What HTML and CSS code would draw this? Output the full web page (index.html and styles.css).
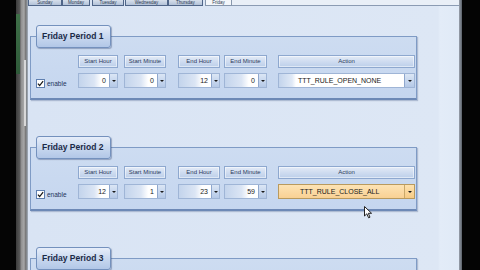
FILE: index.html
```html
<!DOCTYPE html>
<html>
<head>
<meta charset="utf-8">
<link rel="stylesheet" href="styles.css">
</head>
<body>
<div class="screen">
  <div class="edge-left"></div>
  <div class="gutter"><div class="gutter-green"></div><div class="gutter-light"></div></div>
  <div class="window">
    <div class="tabbar">
      <div class="tab t-sun">Sunday</div>
      <div class="tab t-mon">Monday</div>
      <div class="tab t-tue">Tuesday</div>
      <div class="tab t-wed">Wednesday</div>
      <div class="tab t-thu">Thursday</div>
      <div class="tab t-fri active">Friday</div>
      <div class="tab-line"></div>
    </div>
    <div class="content">
      <section class="group">
        <div class="group-title">Friday Period 1</div>
        <div class="panel">
          <div class="row heads">
            <div class="lead"></div>
            <div class="colhead sh">Start Hour</div>
            <div class="colhead sm">Start Minute</div>
            <div class="colhead eh">End Hour</div>
            <div class="colhead em">End Minute</div>
            <div class="colhead ac">Action</div>
          </div>
          <div class="row ctrls">
            <div class="lead enable"><span class="chk"><svg viewBox="0 0 8 8" width="7" height="7"><path d="M1 4.2 L3 6.3 L7 1.2" fill="none" stroke="#1a1a1a" stroke-width="1.4"/></svg></span>enable</div>
            <div class="spin sh"><span class="val">0</span><span class="btn"><i></i></span></div>
            <div class="spin sm"><span class="val">0</span><span class="btn"><i></i></span></div>
            <div class="spin eh"><span class="val">12</span><span class="btn"><i></i></span></div>
            <div class="spin em"><span class="val">0</span><span class="btn"><i></i></span></div>
            <div class="combo ac"><span class="ctext">TTT_RULE_OPEN_NONE</span><span class="btn"><i></i></span></div>
          </div>
        </div>
      </section>
      <section class="group">
        <div class="group-title">Friday Period 2</div>
        <div class="panel">
          <div class="row heads">
            <div class="lead"></div>
            <div class="colhead sh">Start Hour</div>
            <div class="colhead sm">Start Minute</div>
            <div class="colhead eh">End Hour</div>
            <div class="colhead em">End Minute</div>
            <div class="colhead ac">Action</div>
          </div>
          <div class="row ctrls">
            <div class="lead enable"><span class="chk"><svg viewBox="0 0 8 8" width="7" height="7"><path d="M1 4.2 L3 6.3 L7 1.2" fill="none" stroke="#1a1a1a" stroke-width="1.4"/></svg></span>enable</div>
            <div class="spin sh"><span class="val">12</span><span class="btn"><i></i></span></div>
            <div class="spin sm"><span class="val">1</span><span class="btn"><i></i></span></div>
            <div class="spin eh"><span class="val">23</span><span class="btn"><i></i></span></div>
            <div class="spin em"><span class="val">59</span><span class="btn"><i></i></span></div>
            <div class="combo ac hot"><span class="ctext">TTT_RULE_CLOSE_ALL</span><span class="btn"><i></i></span></div>
          </div>
        </div>
      </section>
      <section class="group">
        <div class="group-title">Friday Period 3</div>
        <div class="panel"></div>
      </section>
    </div>
  </div>
  <div class="rborder"></div>
  <div class="edge-right"></div>
</div>
<svg class="cursor" width="9" height="13" viewBox="0 0 9 13"><path d="M0.5 0.5 L0.5 10 L2.8 7.8 L4.6 11.8 L6 11.2 L4.3 7.3 L7.6 7.3 Z" fill="#fff" stroke="#222" stroke-width="1"/></svg>
</body>
</html>
```

FILE: styles.css
```css
html, body {
  margin: 0;
  padding: 0;
  width: 480px;
  height: 270px;
  overflow: hidden;
  background: #000;
  font-family: "Liberation Sans", Arial, sans-serif;
}
.screen {
  display: flex;
  width: 480px;
  height: 270px;
  overflow: hidden;
}
.edge-left { width: 16px; background: #050505; flex: none; }
.gutter {
  width: 12px;
  flex: none;
  display: flex;
  background: linear-gradient(to right, #3c3c3c 0, #5a5a5a 4px, #8e8e8e 5px, #a7a7a7 8px, #6c6c6c 10px, #9aa3ad 11px);
}
.gutter-green {
  width: 4px;
  height: 60px;
  margin-top: 14px;
  background: linear-gradient(#3f6f48, #2f5a3a);
}
.gutter-light {
  width: 2px;
  height: 66px;
  margin-top: 60px;
  margin-left: 4px;
  background: #d8d8d8;
}
.window {
  width: 431px;
  flex: none;
  background: linear-gradient(to right, #d9e4f4 0, #dde7f5 410px, #e3ecf8 412px, #e0eaf7 431px);
  display: flex;
  flex-direction: column;
  overflow: hidden;
}
.tabbar {
  flex: none;
  height: 6px;
  display: flex;
  align-items: flex-start;
  overflow: hidden;
}
.tab {
  height: 6px;
  box-sizing: border-box;
  border: 1px solid #4f6588;
  border-top: none;
  background: linear-gradient(#d6dfeb, #b3c2d8);
  font-size: 4.5px;
  color: #2a3850;
  text-align: center;
  line-height: 5px;
  overflow: hidden;
  flex: none;
  white-space: nowrap;
}
.t-sun { width: 34px; }
.t-mon { width: 28px; }
.t-tue { width: 32px; margin-left: 2px; }
.t-wed { width: 43px; margin-left: 1px; }
.t-thu { width: 35px; }
.t-fri { width: 27px; margin-left: 2px; }
.tab.active { background: #f3f6fa; border-color: #8797ad; }
.tab-line {
  flex: 1;
  height: 5px;
  border-bottom: 1px solid #8b9bb3;
  background: #e9eff7;
}
.content {
  flex: none;
  padding: 19px 0 0 2px;
}
.group { margin-bottom: 36px; }
.group-title {
  position: relative;
  z-index: 2;
  margin-left: 6px;
  width: 75px;
  height: 23px;
  box-sizing: border-box;
  border: 1px solid #7491bd;
  border-radius: 3px;
  background: linear-gradient(#e7eefa 0, #cbdaf0 45%, #b2c7e7 100%);
  box-shadow: 1px 1px 1px rgba(70, 90, 130, 0.45);
  font-weight: bold;
  font-size: 8.5px;
  line-height: 21px;
  color: #1b2a47;
  padding-left: 5px;
  margin-bottom: -12px;
}
.panel {
  width: 387px;
  height: 64px;
  box-sizing: border-box;
  border: 1px solid #7f9bc5;
  border-bottom: 2px solid #6d89b6;
  background: linear-gradient(#cddcf1 0, #c5d6ef 100%);
  box-shadow: 1px 1px 1px rgba(90, 110, 150, 0.35);
  padding-top: 18px;
}
.row { display: flex; }
.heads { height: 13px; }
.ctrls { height: 15px; margin-top: 5px; }
.lead { width: 47px; flex: none; }
.sh { width: 40px; }
.sm { width: 42px; margin-left: 6px; }
.eh { width: 42px; margin-left: 12px; }
.em { width: 43px; margin-left: 4px; }
.ac { width: 137px; margin-left: 11px; }
.colhead {
  box-sizing: border-box;
  flex: none;
  border: 1px solid #8ea8cf;
  background: linear-gradient(#e3ebf7 0, #cfdcf0 50%, #bccfea 100%);
  box-shadow: inset 0 0 0 1px rgba(255,255,255,0.5);
  font-size: 6px;
  color: #2b3b5c;
  text-align: center;
  line-height: 11px;
  white-space: nowrap;
  overflow: hidden;
}
.enable {
  display: flex;
  align-items: flex-end;
  padding-left: 5px;
  box-sizing: border-box;
  font-size: 6.5px;
  color: #25355a;
  line-height: 9px;
}
.chk {
  width: 9px;
  height: 9px;
  box-sizing: border-box;
  border: 1px solid #5f7fb0;
  background: #fff;
  margin-right: 2px;
  display: flex;
  align-items: center;
  justify-content: center;
}
.spin, .combo {
  box-sizing: border-box;
  flex: none;
  display: flex;
  border: 1px solid #9fb5d6;
  background: linear-gradient(to right, #c3d4ec 0, #dbe5f4 40%, #ffffff 58%, #ffffff 100%);
}
.val {
  flex: 1;
  text-align: right;
  font-size: 7px;
  line-height: 13px;
  color: #1a1a1a;
  padding-right: 3px;
}
.btn {
  width: 8px;
  flex: none;
  box-sizing: border-box;
  border-left: 1px solid #8fa7cd;
  background: linear-gradient(#dbe6f5, #b5c9e7);
  display: flex;
  align-items: center;
  justify-content: center;
}
.btn i {
  width: 0;
  height: 0;
  border-left: 2px solid transparent;
  border-right: 2px solid transparent;
  border-top: 2px solid #1b1b1b;
}
.combo {
  background: linear-gradient(to right, #c3d4ec 0, #e0e9f6 13px, #ffffff 17px, #ffffff 100%);
}
.combo .btn { width: 10px; }
.ctext {
  flex: 1;
  font-size: 7px;
  line-height: 13px;
  color: #1a1a1a;
  padding-left: 19px;
  white-space: nowrap;
}
.combo.hot {
  border-color: #b99a5e;
  background: linear-gradient(#fde3b4, #f9d194);
}
.combo.hot .ctext { padding-left: 21px; }
.combo.hot .btn {
  border-left: 1px solid #c9a86a;
  background: linear-gradient(#fde2b0, #f7cb85);
}
.rborder {
  width: 3px;
  flex: none;
  background: linear-gradient(to right, #9aa2ae, #5a6068);
}
.edge-right { flex: 1; background: #040404; }
.cursor {
  position: absolute;
  left: 364px;
  top: 206px;
}
```
